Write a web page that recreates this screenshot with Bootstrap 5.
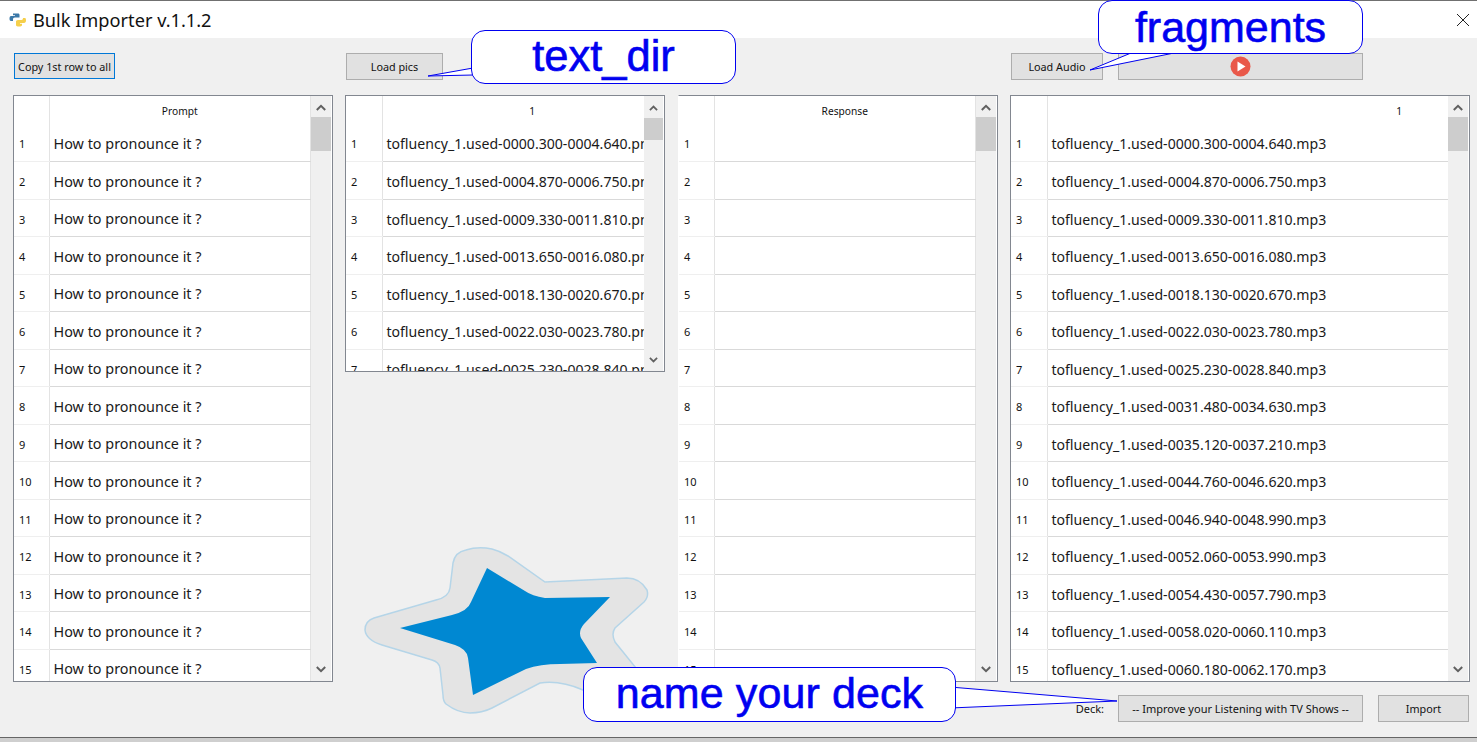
<!DOCTYPE html>
<html lang="en">
<head>
<meta charset="UTF-8">
<title>Bulk Importer</title>
<link href="https://cdn.jsdelivr.net/npm/bootstrap@5.3.0/dist/css/bootstrap.min.css" rel="stylesheet">
<style>
body { background: #cfcfcf; height: 742px; overflow: hidden; font-family: "Noto Sans", sans-serif; position: relative; }
.win { background: #f0f0f0; height: 738px; border-top: 1px solid #707070; border-bottom: 1px solid #666; }
.titlebar { background: #fff; height: 37px; padding-left: 9px; }
.titlebar h1 { font-size: 18.2px; font-weight: 400; margin: 2px 0 0 7px; color: #111; font-family: "Noto Sans", sans-serif; }
.closex { margin-right: 7px; }
.workarea { padding: 15px 0 0 13px; }
.pcol { width: 320px; margin-right: 12px; }
.pcol.wide { width: 460px; margin-right: 0; }
.pcol.third { margin-left: 1px; }
.tools { height: 42px; padding-left: 1px; }
.winbtn.btn { background: #e1e1e1; border: 1px solid #adadad; border-radius: 0; font-size: 10.8px; line-height: 1; color: #111; padding: 1px 0 0; height: 27px; display: flex; align-items: center; justify-content: center; }
.winbtn.copybtn { width: 101px; height: 26px; border-color: #0078d7; padding-top: 2px; }
.winbtn.picsbtn { width: 97px; }
.winbtn.audiobtn { width: 92px; }
.winbtn.playbtn { width: 245px; margin-left: 15px; padding: 0; }
.winbtn.deckbtn { width: 245px; font-size: 11px; padding-top: 0; }
.winbtn.importbtn { width: 91px; margin-left: 15px; margin-right: 8px; }
.pane { height: 587px; background: #fff; border: 1px solid #828790; }
.pane.short { height: 277px; }
.pane.noleft { border-left-color: #fff; }
.gridwrap { overflow: hidden; min-width: 0; }
.sheet.table { table-layout: fixed; width: 100%; margin: 0; --bs-table-bg: #fff; }
.sheet.table th, .sheet.table td { border: 0; padding: 0; white-space: nowrap; overflow: hidden; vertical-align: middle; }
.sheet.table thead th { height: 28px; font-size: 10.2px; font-weight: 400; text-align: center; color: #111; border-left: 1px solid #e3e3e3; padding-top: 3px; }
.sheet.table thead th:first-child { width: 35px; border-left: 0; }
.sheet.offset.table thead th:first-child { width: 36px; }
.sheet.table tbody th { font-size: 11px; font-weight: 400; height: 37.5px; padding: 4px 0 0 5px; border-bottom: 1px solid #efefef; color: #111; }
.sheet.table tbody td { font-size: 14.1px; padding: 3px 0 0 4px; color: #1a1a1a; border-left: 1px solid #e3e3e3; border-bottom: 1px solid #d9d9d9; }
.sheet.promptgrid.table tbody td { font-size: 14.4px; }
.sheet.ruled.table tbody td, .sheet.ruled.table thead th:last-child { border-right: 1px solid #e3e3e3; }
.head-picture.table thead th:last-child { padding-left: 38px; }
.sheet.table thead th.head-far { text-align: right; padding-right: 46px; }
.vbar { width: 20px; flex: none; background: #f0f0f0; margin-right: 1px; padding: 8px 0 8px; }
.pane.short .vbar { width: 19px; margin-right: 1px; padding: 9px 0 8px; }
.vthumb { background: #cdcdcd; height: 34px; margin-top: 6px; }
.pane.short .vthumb { height: 22px; margin-top: 7px; }
.pane.short .vbar svg { width: 9px; height: 6px; }
.decklabel { font-size: 11px; color: #111; margin-right: 14px; padding-top: 2px; }
.bottomrow { padding-top: 13px; }
.akistar { position: absolute; left: 360px; top: 542px; width: 295px; height: 180px; filter: blur(.4px); }
.tails { position: absolute; left: 0; top: 0; width: 1477px; height: 742px; pointer-events: none; }
.bubble { position: absolute; background: #fff; border: 1.5px solid #0000f0; border-radius: 14px; color: #0000f0; font-family: "Liberation Sans", sans-serif; display: flex; align-items: center; justify-content: center; -webkit-text-stroke: .6px #0000f0; }
.bubble-dir { left: 471px; top: 30px; width: 265px; height: 54px; font-size: 43.500px; }
.bubble-frag { left: 1098px; top: 0; width: 265px; height: 54px; font-size: 43px; }
.bubble-deck { left: 583px; top: 667px; width: 373px; height: 55px; font-size: 43px; letter-spacing: .1px; padding-bottom: 2px; }
</style>
</head>
<body>

<div class="win">
    <!-- title bar -->
    <div class="titlebar d-flex align-items-center">
        <svg width="17" height="15" viewBox="0 0 17 15">
            <path d="M4 1.500h5c1 0 1.500.6 1.500 1.500v2.500H6C4.500 5.500 4 6.200 4 7.500V9H2C.8 9 .5 7.800 .5 6.500S1 4 2 4h4V3.300H4z" fill="#3b78a8"/>
            <path d="M16 6c.8 0 1 1.200 1 2.500S16.300 11 15 11h-4v.7h2v1.500c0 .8-1.500 1.300-3 1.300s-3-.5-3-1.300V9.800c0-1 .7-1.800 2-1.800h3.500C13.500 8 14 7.300 14 6z" fill="#f5cf4b"/>
        </svg>
        <h1>Bulk Importer v.1.1.2</h1>
        <svg class="closex ms-auto" width="14" height="14" viewBox="0 0 14 14">
            <path d="M1 1l12 12M13 1L1 13" stroke="#222" stroke-width="1" fill="none"/>
        </svg>
    </div>

    <div class="workarea">
        <div class="d-flex">
            <div class="pcol">
                <div class="tools"><button class="btn winbtn copybtn">Copy 1st row to all</button></div>
                <div class="pane d-flex" id="panePrompt"></div>
            </div>
            <div class="pcol">
                <div class="tools"><button class="btn winbtn picsbtn">Load pics</button></div>
                <div class="pane short d-flex" id="panePics"></div>
            </div>
            <div class="pcol third">
                <div class="tools"></div>
                <div class="pane noleft d-flex" id="paneResponse"></div>
            </div>
            <div class="pcol wide">
                <div class="tools d-flex align-items-start">
                    <button class="btn winbtn audiobtn">Load Audio</button>
                    <button class="btn winbtn playbtn">
                        <svg width="21" height="21" viewBox="0 0 21 21">
                            <circle cx="10.500" cy="10.500" r="10" fill="#e9594a"/>
                            <path d="M7.500 5.500l8 5-8 5z" fill="#fff"/>
                        </svg>
                    </button>
                </div>
                <div class="pane d-flex" id="paneAudio"></div>
            </div>
        </div>

        <div class="bottomrow d-flex justify-content-end align-items-center">
            <span class="decklabel">Deck:</span>
            <button class="btn winbtn deckbtn">-- Improve your Listening with TV Shows --</button>
            <button class="btn winbtn importbtn">Import</button>
        </div>
    </div>
</div>

<!-- anki star -->
<svg class="akistar" viewBox="360 542 295 180">
    <path d="M365 630Q365 621 374 618L436 600Q449 597 450 588L453 563Q455 552 466 550Q478 546 492 549Q500 551 508 556L545 582L627 578Q640 578 647 590Q649 597 644 602L615 628Q611 634 615 642L636 668L600 692L583 690Q560 680 540 683L492 708Q482 713 470 713Q458 713 446 704Q443 701 443 695L440 668Q439 662 432 660L382 645Q366 640 365 630Z" fill="#e4e4e4" stroke="#b5d5e8" stroke-width="1.500"/>
    <path d="M400 628L452 615Q468 611 471 602L487 568L525 591Q532 596 545 598L610 597L584 624Q578 631 581 638L597 663L560 664Q540 664 526 669L473 695L468 658Q467 649 455 645Z" fill="#0088d2"/>
</svg>

<!-- callouts -->
<svg class="tails" viewBox="0 0 1477 742">
    <g fill="#fff" stroke="#0000f0" stroke-width="1">
        <path d="M473 68L428 76L473 75"/>
        <path d="M1131 53L1090 70L1174 53"/>
        <path d="M950 687L1117 701L950 708"/>
    </g>
</svg>
<div class="bubble bubble-dir">text_dir</div>
<div class="bubble bubble-frag">fragments</div>
<div class="bubble bubble-deck">name your deck</div>

<script>
    const times = ["0000.300-0004.640", "0004.870-0006.750", "0009.330-0011.810", "0013.650-0016.080", "0018.130-0020.670",
        "0022.030-0023.780", "0025.230-0028.840", "0031.480-0034.630", "0035.120-0037.210", "0044.760-0046.620",
        "0046.940-0048.990", "0052.060-0053.990", "0054.430-0057.790", "0058.020-0060.110", "0060.180-0062.170"];

    const chevron = d => `<svg class="d-block mx-auto" width="10" height="7" viewBox="0 0 10 7"><path d="${d}" stroke="#606060" stroke-width="2" fill="none"/></svg>`;

    function buildPane(id, title, cellText, gridClass, headClass) {
        let rows = "";
        times.forEach((t, i) => {
            rows += `<tr><th>${i + 1}</th><td>${cellText(t)}</td></tr>`;
        });
        document.getElementById(id).innerHTML = `
            <div class="gridwrap flex-grow-1">
                <table class="table sheet ${gridClass}">
                    <thead><tr><th></th><th class="${headClass}">${title}</th></tr></thead>
                    <tbody>${rows}</tbody>
                </table>
            </div>
            <div class="vbar d-flex flex-column justify-content-between">
                <div>${chevron("M.8 6l4.200-4.200 4.200 4.200")}<div class="vthumb"></div></div>
                ${chevron("M.8 1l4.200 4.200 4.200-4.200")}
            </div>`;
    }

    buildPane("panePrompt", "Prompt", () => "How to pronounce it ?", "promptgrid ruled", "");
    buildPane("panePics", "1", t => `tofluency_1.used-${t}.png`, "offset head-picture", "");
    buildPane("paneResponse", "Response", () => "", "ruled", "");
    buildPane("paneAudio", "1", t => `tofluency_1.used-${t}.mp3`, "offset", "head-far");
</script>
<script src="https://cdn.jsdelivr.net/npm/bootstrap@5.3.0/dist/js/bootstrap.bundle.min.js"></script>
</body>
</html>
